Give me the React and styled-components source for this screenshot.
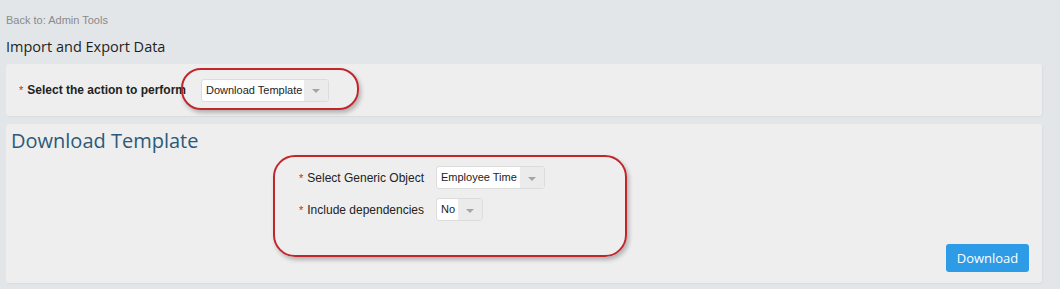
import React from 'react';
import styled, { createGlobalStyle } from 'styled-components';

const Global = createGlobalStyle`
    html, body {
        margin:0;
        padding:0;
        background:#e3e6e8;
    }
    body {
        font-family:Arial, "Liberation Sans", sans-serif;
        color:#333;
    }
`;

function Select({ value, width }) {
    return (
        <SelectBox $width={width}>
            <SelectValue>{value}</SelectValue>
            <SelectArrow><Caret /></SelectArrow>
        </SelectBox>
    );
}

function App() {
    return (
        <Page>
            <Global />
            <BackLink>Back to: Admin Tools</BackLink>
            <Title>Import and Export Data</Title>

            <ActionPanel>
                <Label $width={182} $bold>
                    <Star>*</Star>Select the action to perform
                </Label>
                <Select value="Download Template" width={128} />
                <Highlight />
            </ActionPanel>

            <TemplatePanel>
                <Heading>Download Template</Heading>
                <Body>
                    <FormOutline>
                        <FormGrid>
                            <Label><Star>*</Star>Select Generic Object</Label>
                            <Select value="Employee Time" width={109} />
                            <Label><Star>*</Star>Include dependencies</Label>
                            <Select value="No" width={47} />
                        </FormGrid>
                    </FormOutline>
                    <Button>Download</Button>
                </Body>
            </TemplatePanel>
        </Page>
    );
}

const Page = styled.div`
    width:1060px;
    height:289px;
    padding:13px 18px 0 6px;
    box-sizing:border-box;
    overflow:hidden;
`;

const BackLink = styled.div`
    font-size:11px;
    color:#8a8a8a;
    line-height:14px;
`;

const Title = styled.div`
    font-family:"Open Sans", "Liberation Sans", sans-serif;
    font-size:14.5px;
    color:#1e1e1e;
    line-height:20px;
    margin-top:10px;
`;

const Panel = styled.div`
    background:#eeeeee;
    border-radius:3px;
    box-shadow:1px 1px 2px rgba(0,0,0,0.04);
`;

const ActionPanel = styled(Panel)`
    position:relative;
    display:flex;
    align-items:center;
    height:52px;
    margin-top:7px;
    padding-left:13px;
`;

const Highlight = styled.div`
    position:absolute;
    left:175px;
    top:4px;
    width:178px;
    height:42px;
    box-sizing:border-box;
    border:2px solid #c0272d;
    border-radius:20px;
    box-shadow:2px 3px 4px rgba(0,0,0,0.25);
    pointer-events:none;
`;

const Label = styled.div`
    font-size:12px;
    font-weight:${p => (p.$bold ? 'bold' : 'normal')};
    color:#222;
    width:${p => (p.$width ? `${p.$width}px` : 'auto')};
    flex:none;
    white-space:nowrap;
`;

const Star = styled.span`
    color:#c0272d;
    margin-right:4px;
    font-size:11px;
    font-weight:normal;
`;

const SelectBox = styled.div`
    display:flex;
    width:${p => p.$width}px;
    height:23px;
    box-sizing:border-box;
    border:1px solid #dcdcdc;
    border-radius:3px;
    background:#fff;
    overflow:hidden;
`;

const SelectValue = styled.div`
    flex:1;
    font-size:11px;
    color:#222;
    line-height:21px;
    padding-left:4px;
    white-space:nowrap;
`;

const SelectArrow = styled.div`
    width:24px;
    display:flex;
    align-items:center;
    justify-content:center;
    background:#ebebeb;
`;

const Caret = styled.span`
    width:0;
    height:0;
    border-left:4px solid transparent;
    border-right:4px solid transparent;
    border-top:4px solid #a5a5a5;
    margin-top:2px;
`;

const TemplatePanel = styled(Panel)`
    margin-top:8px;
    height:159px;
    box-sizing:border-box;
    padding:4px 13px 0 5px;
`;

const Heading = styled.div`
    font-family:"Open Sans", "Liberation Sans", sans-serif;
    font-size:20px;
    color:#2d5a78;
    line-height:26px;
`;

const Body = styled.div`
    display:flex;
    align-items:flex-start;
    margin-top:1px;
`;

const FormOutline = styled.div`
    margin-left:262px;
    width:354px;
    height:102px;
    box-sizing:border-box;
    border:2px solid #c0272d;
    border-radius:22px;
    box-shadow:2px 3px 4px rgba(0,0,0,0.25);
    padding:9px 0 0 24px;
`;

const FormGrid = styled.div`
    display:grid;
    grid-template-columns:137px auto;
    justify-items:start;
    align-items:center;
    row-gap:9px;
`;

const Button = styled.button`
    margin-left:auto;
    margin-top:89px;
    width:83px;
    height:28px;
    border:none;
    border-radius:3px;
    background:#2d9be6;
    color:#fff;
    font-family:"Open Sans", "Liberation Sans", sans-serif;
    font-size:13px;
`;

export default App;
